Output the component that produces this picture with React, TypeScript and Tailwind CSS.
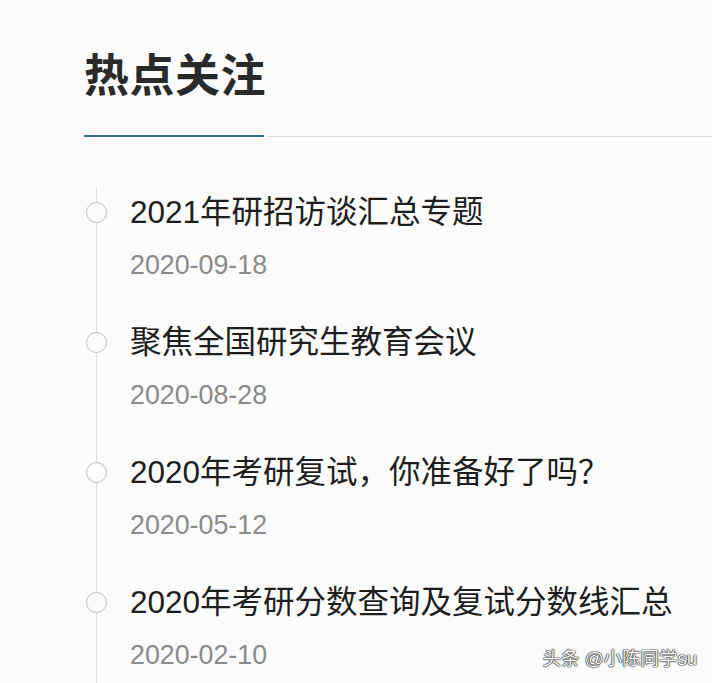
import React from 'react';

interface NewsItem {
    id: number;
    title: string;
    date: string;
}

const items: NewsItem[] = [
    { id: 1, title: '2021年研招访谈汇总专题', date: '2020-09-18' },
    { id: 2, title: '聚焦全国研究生教育会议', date: '2020-08-28' },
    { id: 3, title: '2020年考研复试，你准备好了吗？', date: '2020-05-12' },
    { id: 4, title: '2020年考研分数查询及复试分数线汇总', date: '2020-02-10' },
];

export default function App() {
    return (
        <div className="relative h-[683px] w-full overflow-hidden bg-[#fbfbfb] font-['Liberation_Sans','Noto_Sans_CJK_SC',sans-serif]">
            <div className="pl-[84px] pt-[54px]">
                {/* Header */}
                <h2 className="text-[45px] leading-[45px] font-bold text-[#2a2a2a] tracking-[0.5px]">热点关注</h2>
                <div className="mt-[36px] flex items-center">
                    <div className="h-[2px] w-[180px] bg-[#3c6e8f]" />
                    <div className="ml-[3px] h-px flex-1 bg-[#dcdcdc]" />
                </div>

                {/* Timeline */}
                <ul className="mt-[51px] ml-[12px] border-l border-[#dddddd]">
                    {items.map((item) => (
                        <li key={item.id} className="relative h-[130px] pl-[33px] pt-[4px]">
                            <span className="absolute left-[-11px] top-[14px] h-[21px] w-[21px] rounded-full border-[1.5px] border-[#bdbdbd] bg-[#fbfbfb]" />
                            <p className="text-[31.5px] leading-[40px] text-[#1e1e1e] whitespace-nowrap">{item.title}</p>
                            <p className="mt-[16px] text-[26.8px] leading-[34px] text-[#8a8a8a]">{item.date}</p>
                        </li>
                    ))}
                </ul>
            </div>

            {/* Watermark */}
            <span className="absolute right-[15px] bottom-[13px] text-[18.5px] leading-[22px] text-white [text-shadow:0_0_1px_#000,0_0_1px_#000,0_0_2px_rgba(0,0,0,0.7)]">
                头条 @小陈同学su
            </span>
        </div>
    );
}
